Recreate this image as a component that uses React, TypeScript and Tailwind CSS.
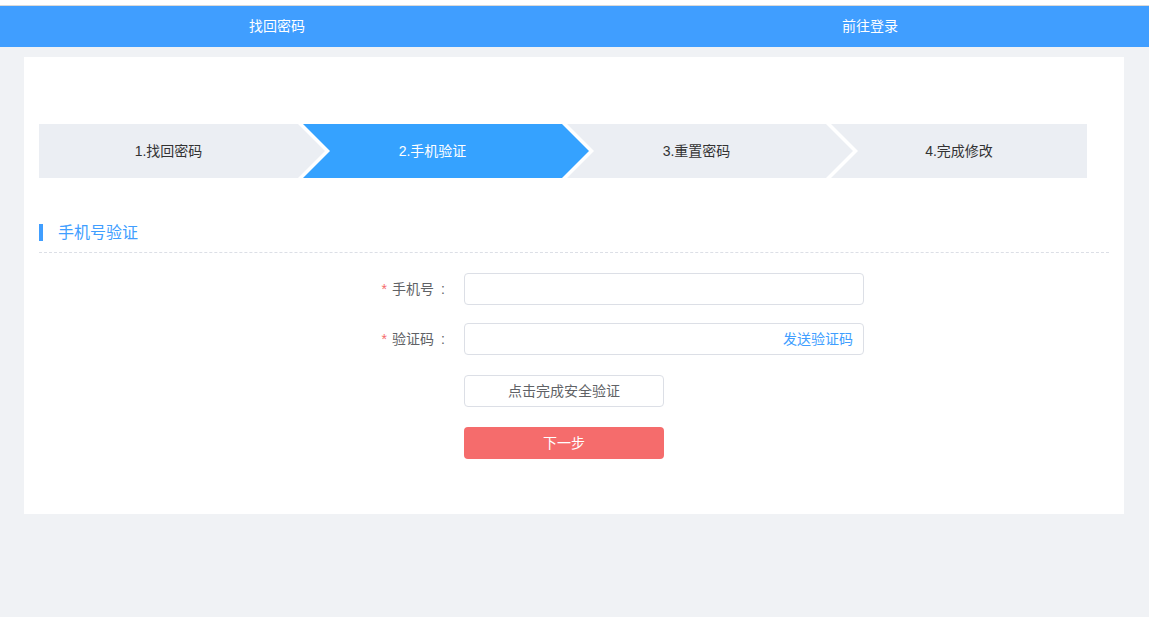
import React, { useState } from 'react';

const font = "font-['Liberation_Sans','Noto_Sans_CJK_SC',sans-serif]";

const App = () => {
  const [phone, setPhone] = useState('');
  const [code, setCode] = useState('');

  return (
    <div className={`min-h-[617px] bg-[#f0f2f5] ${font}`}>
      {/* top strip */}
      <div className="h-[5px] bg-white" />
      <div className="h-px bg-[#d9d9d9]" />
      <div className="flex h-[41px] overflow-hidden bg-[#409eff] text-sm leading-[41px] text-white">
        <div className="w-[554px] shrink-0 text-center">找回密码</div>
        <div className="w-[632px] shrink-0 text-center">前往登录</div>
      </div>

      {/* card */}
      <div className="ml-6 mt-[10px] w-[1100px] bg-white px-[15px] pb-[55px] pt-[67px]">
        {/* steps */}
        <div className="flex h-[54px] text-sm">
          <div className="flex w-[286px] shrink-0 items-center justify-center bg-[#ebeef3] pr-[27px] text-[#333] [clip-path:polygon(0_0,259px_0,100%_50%,259px_100%,0_100%)]">
            1.找回密码
          </div>
          <div className="-ml-[22px] flex w-[286px] shrink-0 items-center justify-center bg-[#35a2ff] pr-[27px] text-white [clip-path:polygon(0_0,259px_0,100%_50%,259px_100%,0_100%,27px_50%)]">
            2.手机验证
          </div>
          <div className="-ml-[22px] flex w-[286px] shrink-0 items-center justify-center bg-[#ebeef3] pr-[27px] text-[#333] [clip-path:polygon(0_0,259px_0,100%_50%,259px_100%,0_100%,27px_50%)]">
            3.重置密码
          </div>
          <div className="-ml-[22px] flex w-[256px] shrink-0 items-center justify-center bg-[#ebeef3] text-[#333] [clip-path:polygon(0_0,100%_0,100%_100%,0_100%,27px_50%)]">
            4.完成修改
          </div>
        </div>

        {/* section title */}
        <div className="mt-[46px] flex h-[17px] items-center">
          <span className="h-[17px] w-1 bg-[#409eff]" />
          <span className="ml-[15px] text-base leading-[17px] text-[#409eff]">手机号验证</span>
        </div>
        <div className="mt-[11px] border-b border-dashed border-[#dcdfe6]" />

        {/* form */}
        <div className="ml-[305px] mt-5 text-sm">
          <div className="flex items-center">
            <label className="w-[120px] pr-3 text-right text-[#606266]">
              <span className="mr-[5px] text-[#f56c6c]">*</span>手机号
              <span className="inline-block w-[18px] text-center">:</span>
            </label>
            <input
              value={phone}
              onChange={(e) => setPhone(e.target.value)}
              className="h-8 w-[400px] rounded border border-[#dcdfe6] px-[15px] text-[#606266] outline-none"
            />
          </div>
          <div className="mt-[18px] flex items-center">
            <label className="w-[120px] pr-3 text-right text-[#606266]">
              <span className="mr-[5px] text-[#f56c6c]">*</span>验证码
              <span className="inline-block w-[18px] text-center">:</span>
            </label>
            <div className="flex h-8 w-[400px] items-center rounded border border-[#dcdfe6] pl-[15px] pr-[10px]">
              <input
                value={code}
                onChange={(e) => setCode(e.target.value)}
                className="min-w-0 flex-1 text-[#606266] outline-none"
              />
              <span className="cursor-pointer text-[#409eff]">发送验证码</span>
            </div>
          </div>
          <div className="ml-[120px] mt-5">
            <button className="h-8 w-[200px] rounded border border-[#dcdfe6] bg-white text-[#606266]">
              点击完成安全验证
            </button>
          </div>
          <div className="ml-[120px] mt-5">
            <button className="h-8 w-[200px] rounded bg-[#f56c6c] text-white">下一步</button>
          </div>
        </div>
      </div>
    </div>
  );
};

export default App;
